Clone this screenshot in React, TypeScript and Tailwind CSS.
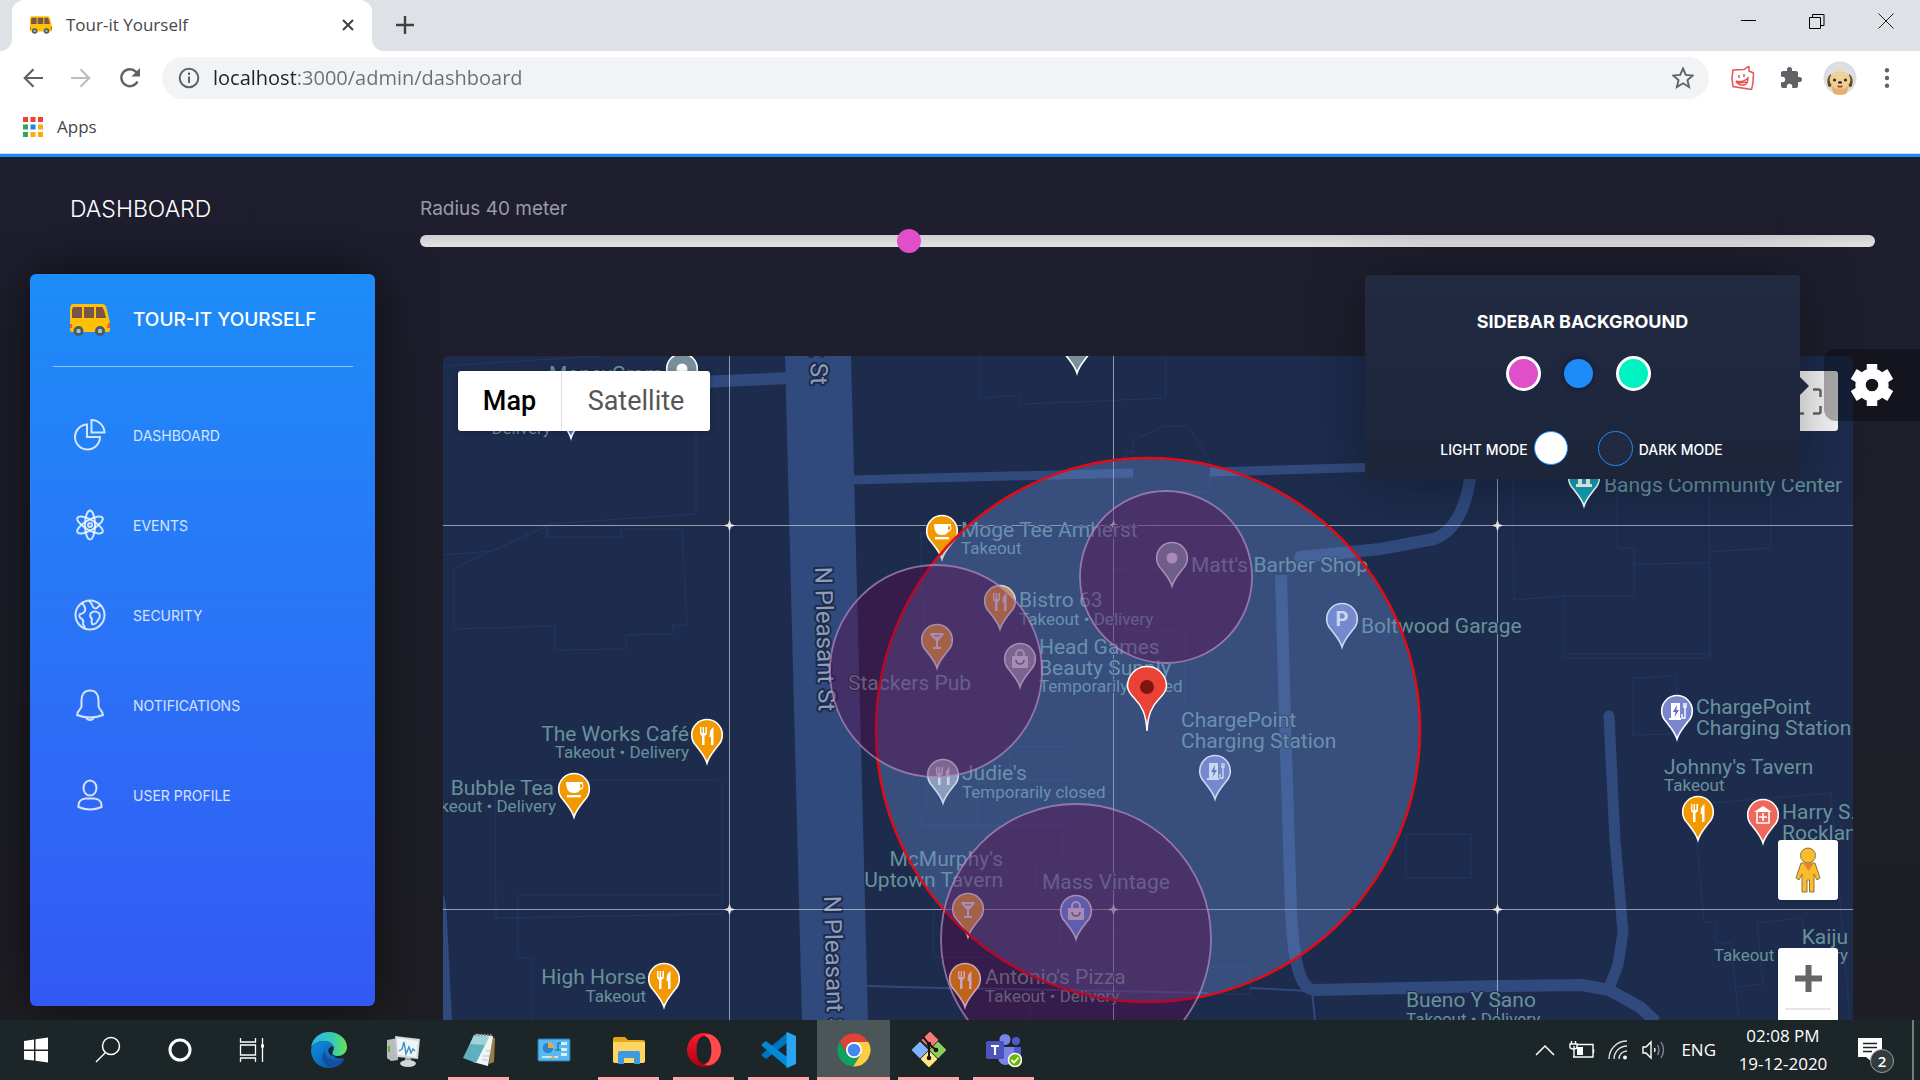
import React, { useState } from "react";

type Glyph = "cup" | "fork" | "cocktail" | "bag" | "dot" | "parking" | "ev" | "museum" | "hospital" | "none";

const ORANGE = "#f29900";
const GREY = "#78909c";
const INDIGO = "#7986cb";

const pins: { x: number; y: number; fill: string; glyph: Glyph }[] = [
  { x: 682, y: 396, fill: GREY, glyph: "dot" },
  { x: 571, y: 437, fill: "#4285f4", glyph: "none" },
  { x: 1077, y: 372, fill: GREY, glyph: "none" },
  { x: 942, y: 558, fill: ORANGE, glyph: "cup" },
  { x: 1000, y: 628, fill: ORANGE, glyph: "fork" },
  { x: 937, y: 667, fill: ORANGE, glyph: "cocktail" },
  { x: 1020, y: 686, fill: "#94a0ae", glyph: "bag" },
  { x: 1172, y: 585, fill: GREY, glyph: "dot" },
  { x: 1342, y: 646, fill: INDIGO, glyph: "parking" },
  { x: 1215, y: 798, fill: INDIGO, glyph: "ev" },
  { x: 943, y: 802, fill: "#9aa5b0", glyph: "fork" },
  { x: 968, y: 936, fill: ORANGE, glyph: "cocktail" },
  { x: 1076, y: 938, fill: "#5491f5", glyph: "bag" },
  { x: 965, y: 1006, fill: ORANGE, glyph: "fork" },
  { x: 707, y: 762, fill: ORANGE, glyph: "fork" },
  { x: 574, y: 816, fill: ORANGE, glyph: "cup" },
  { x: 664, y: 1006, fill: ORANGE, glyph: "fork" },
  { x: 1677, y: 738, fill: INDIGO, glyph: "ev" },
  { x: 1698, y: 839, fill: ORANGE, glyph: "fork" },
  { x: 1763, y: 842, fill: "#f0675c", glyph: "hospital" },
  { x: 1584, y: 505, fill: "#12a5b8", glyph: "museum" },
];

const labels: { x: number; y: number; text: string; small?: boolean; end?: boolean }[] = [
  { x: 549, y: 381, text: "MoneyGram" },
  { x: 551, y: 434, text: "Delivery", small: true, end: true },
  { x: 961, y: 537, text: "Moge Tee Amherst" },
  { x: 961, y: 554, text: "Takeout", small: true },
  { x: 1019, y: 607, text: "Bistro 63" },
  { x: 1019, y: 625, text: "Takeout • Delivery", small: true },
  { x: 1039, y: 654, text: "Head Games" },
  { x: 1039, y: 675, text: "Beauty Supply" },
  { x: 1039, y: 692, text: "Temporarily closed", small: true },
  { x: 1191, y: 572, text: "Matt's Barber Shop" },
  { x: 1361, y: 633, text: "Boltwood Garage" },
  { x: 848, y: 690, text: "Stackers Pub" },
  { x: 962, y: 780, text: "Judie's" },
  { x: 962, y: 798, text: "Temporarily closed", small: true },
  { x: 1181, y: 727, text: "ChargePoint" },
  { x: 1181, y: 748, text: "Charging Station" },
  { x: 1003, y: 866, text: "McMurphy's", end: true },
  { x: 1003, y: 887, text: "Uptown Tavern", end: true },
  { x: 1042, y: 889, text: "Mass Vintage" },
  { x: 985, y: 984, text: "Antonio's Pizza" },
  { x: 985, y: 1002, text: "Takeout • Delivery", small: true },
  { x: 689, y: 741, text: "The Works Café", end: true },
  { x: 689, y: 758, text: "Takeout • Delivery", small: true, end: true },
  { x: 554, y: 795, text: "Bubble Tea", end: true },
  { x: 556, y: 812, text: "Takeout • Delivery", small: true, end: true },
  { x: 646, y: 984, text: "High Horse", end: true },
  { x: 646, y: 1002, text: "Takeout", small: true, end: true },
  { x: 1696, y: 714, text: "ChargePoint" },
  { x: 1696, y: 735, text: "Charging Station" },
  { x: 1664, y: 774, text: "Johnny's Tavern" },
  { x: 1664, y: 791, text: "Takeout", small: true },
  { x: 1782, y: 819, text: "Harry S." },
  { x: 1782, y: 840, text: "Rockland" },
  { x: 1604, y: 492, text: "Bangs Community Center" },
  { x: 1848, y: 944, text: "Kaiju", end: true },
  { x: 1848, y: 961, text: "Takeout • Delivery", small: true, end: true },
  { x: 1406, y: 1007, text: "Bueno Y Sano" },
  { x: 1406, y: 1025, text: "Takeout • Delivery", small: true },
];

const buildings = [
  "M443 366L600 356",
  "M696 431V514L547 524V537L546 524M443 555L492 551L547 526",
  "M547 526V537H621V529H682L687 625H673V634L626 635V649L555 650V626L454 629V568L547 526",
  "M716 780H495L496 918L722 914V780",
  "M720 895H518V958H532V1020",
  "M980 356V398L1020 395V404L1078 402L1166 398V356",
  "M1125 478V452H1133V440H1133L1165 426L1188 426L1210 460V492H1136",
  "M921 593V533H1040V520H1158V530H1180V570H1107L1125 568V630L1190 632",
  "M924 593H970V605H990M924 593V650M924 660H1040M924 711H1030M1125 580H1190V632M1185 632V704H1110",
  "M926 747H1072V822H1072M968 747V780M1010 744V780H1072M926 747V812H922V826H1072M978 780V824M926 840L934 825H1063V860H1036V890",
  "M936 880L933 930V957H1030V1020M1030 932V945H1060V925H1110V870M1060 930H1165V970H1120M1208 967H1250V994H1208",
  "M1513 479L1514 600L1564 596V658H1710V596L1709 479M1564 596H1634V564L1709 563M1617 479V548H1634V564M1771 479V548L1709 552M1564 654H1710",
  "M1632 678L1676 676V734L1633 735V678M1406 834H1471V878H1406V834",
  "M1712 803L1831 793L1850 1020M1697 842L1704 922H1716V943H1731L1739 1020M1757 923L1802 918L1810 1020M1757 923L1763 984L1737 987",
];

function PinGlyph({ kind }: { kind: Glyph }) {
  switch (kind) {
    case "cup":
      return (
        <g fill="#fff">
          <path d="M-8-36H9V-34A4 4 0 0 1 6-28C5-26 3-25 0-25C-5-25-8-28-8-36ZM6-34V-30A2 2 0 0 0 7-34Z" fillRule="evenodd" />
          <rect x="-7" y="-23" width="14" height="2.4" />
        </g>
      );
    case "fork":
      return (
        <g fill="#fff">
          <path d="M-7-37V-31Q-7-29-5-28V-19H-2.500V-28Q0-29 0-31V-37H-1.600V-31H-3V-37H-4.400V-31H-5.600V-37Z" />
          <path d="M6.500-37Q2.500-35 2.500-27H4V-19H6.500Z" />
        </g>
      );
    case "cocktail":
      return <path d="M-6.500-36H6.500V-34L1-28V-22H4V-20H-4V-22H-1V-28L-6.500-34ZM-3.500-34L-2-32.500H2L3.500-34Z" fill="#fff" fillRule="evenodd" />;
    case "bag":
      return (
        <g>
          <rect x="-8" y="-32" width="16" height="12" rx="1" fill="#fff" />
          <path d="M-4-31V-34A4 4 0 0 1 4-34V-31" fill="none" stroke="#fff" strokeWidth="1.800" />
          <path d="M-4-28A4 4 0 0 0 4-28" fill="none" stroke="#5a6a9a" strokeWidth="1.600" />
        </g>
      );
    case "dot":
      return <circle cy="-29" r="5.500" fill="#fff" />;
    case "parking":
      return (
        <text y="-22" textAnchor="middle" fill="#fff" className="font-['Roboto',sans-serif] text-[20px] font-bold">
          P
        </text>
      );
    case "ev":
      return (
        <g>
          <path d="M-6-37H3V-22H4V-20H-8V-22H-6Z" fill="#fff" />
          <path d="M0-35L-4-28H-1.500L-2.500-23L2-30H-.5Z" fill="#5f6cc0" />
          <path d="M5-26V-22H8V-33M7-37V-33H9V-37" stroke="#fff" strokeWidth="1.400" fill="none" />
        </g>
      );
    case "museum":
      return <path d="M0-39L8-34V-32H-8V-34ZM-6-31H-2V-23H-6ZM2-31H6V-23H2ZM-8-23H8V-20H-8Z" fill="#fff" />;
    case "hospital":
      return (
        <g>
          <path d="M0-38L9-32H-9Z" fill="#fff" />
          <path d="M-6-32V-21H6V-32" stroke="#fff" strokeWidth="1.600" fill="none" />
          <path d="M0-31V-23M-4-27H4" stroke="#fff" strokeWidth="1.600" fill="none" />
        </g>
      );
    default:
      return null;
  }
}

function MapDrawing() {
  return (
    <svg className="absolute inset-0 h-full w-full font-['Roboto',sans-serif]" aria-label="Map of N Pleasant St">
      <g transform="translate(-443 -356)">
        <g fill="none" stroke="#223766" strokeWidth="1">
          {buildings.map((d) => (
            <path key={d} d={d} />
          ))}
        </g>
        <g fill="none" stroke="#304a7d" strokeLinejoin="round">
          <path d="M785 356H851L868 1020H802Z" fill="#304a7d" stroke="none" />
          <path d="M443 895Q446 898 447 920L452 1020H443Z" fill="#304a7d" stroke="none" />
          <path d="M700 382L790 378" strokeWidth="12" />
          <path d="M850 480L1133 473M1210 472L1380 467" strokeWidth="9" />
          <path d="M1471 470C1468 505 1455 532 1434 539L1380 549L1300 557" strokeWidth="12" strokeLinecap="round" />
          <path d="M1281 575L1285 720L1291 910C1293 950 1297 990 1315 990L1500 986L1582 985L1609 990L1640 1007L1656 1022" strokeWidth="12" />
          <path d="M1609 716L1615 840L1623 932L1618 965L1609 988" strokeWidth="11" strokeLinecap="round" />
          <path d="M867 986L941 988L1110 991L1208 993M1250 988L1310 991M1312 990L1315 1020" strokeWidth="2" />
        </g>

        <g fill="#8f9db9" stroke="#1d2c4d" strokeWidth="4" strokeLinejoin="round" className="text-[24px]" style={{ paintOrder: "stroke" }}>
          <text transform="translate(811 385) rotate(88.500)" textAnchor="end">N Pleasant St</text>
          <text transform="translate(815 567) rotate(88.500)">N Pleasant St</text>
          <text transform="translate(824 896) rotate(88.500)">N Pleasant St</text>
        </g>

        <g stroke="#d6d9e2" strokeOpacity=".65" strokeWidth="1">
          <path d="M729.500 356V1020M1113.500 356V1020M1497.500 356V1020M443 525.500H1853M443 909.500H1853" />
        </g>
        {[729.5, 1113.5, 1497.5].map((x) =>
          [525.5, 909.5].map((y) => (
            <path key={`${x}-${y}`} transform={`translate(${x} ${y})`} d="M0-6L1.500-1.500L6 0L1.500 1.500L0 6L-1.500 1.500L-6 0L-1.500-1.500Z" fill="#e6e3e0" />
          )),
        )}

        <g fill="#67929b" stroke="#1d2c4d" strokeWidth="2" strokeLinejoin="round" style={{ paintOrder: "stroke" }}>
          {labels.map((l) => (
            <text key={`${l.text}${l.x}${l.y}`} x={l.x} y={l.y} textAnchor={l.end ? "end" : "start"} className={l.small ? "text-[17px]" : "text-[21px]"}>
              {l.text}
            </text>
          ))}
        </g>

        {pins.map((p) => (
          <g key={`${p.x}-${p.y}`} transform={`translate(${p.x} ${p.y + 2})`}>
            <path d="M0-1C-2-8-6-12-11-18.500A15.300 15.300 0 1 1 11-18.500C6-12 2-8 0-1Z" fill={p.fill} stroke="#fff" strokeWidth="1.600" />
            <PinGlyph kind={p.glyph} />
          </g>
        ))}

        <circle cx="1148" cy="730" r="272" fill="#6d90d3" fillOpacity=".35" stroke="#e30b17" strokeWidth="2.500" />
        <g fill="#670044" fillOpacity=".35" stroke="#b58fc0" strokeOpacity=".7" strokeWidth="1.800">
          <circle cx="936" cy="671" r="106" />
          <circle cx="1166" cy="577" r="86" />
          <circle cx="1076" cy="939" r="135" />
        </g>

        <path d="M1147 731C1146 714 1142 706 1135 699C1130 694 1127.500 690 1127.500 686A19.500 19.500 0 1 1 1166.500 686C1166.500 690 1164 694 1159 699C1152 706 1148 714 1147 731Z" fill="#ea4335" stroke="#fff" strokeWidth="1.500" />
        <circle cx="1147" cy="687" r="7" fill="#811411" />
      </g>
    </svg>
  );
}

function Bus({ className }: { className: string }) {
  return (
    <svg viewBox="0 0 40 32" className={className} aria-hidden="true">
      <path d="M3 0H32C35 0 36 2 37 6L40 19V26Q40 28 38 28H2Q0 28 0 26V6Q0 0 3 0Z" fill="#ffc107" />
      <path d="M3 3H12V14H2V6ZM14 3H24V14H14ZM26 3H32Q34 4 36 14H26Z" fill="#795548" />
      <path d="M0 20H2V24H0ZM38 19H40V24H37Z" fill="#ff5722" />
      <circle cx="8.500" cy="27" r="5" fill="#455a64" />
      <circle cx="30" cy="27" r="5" fill="#455a64" />
      <circle cx="8.500" cy="27" r="2.200" fill="#b0bec5" />
      <circle cx="30" cy="27" r="2.200" fill="#b0bec5" />
    </svg>
  );
}

const navIcons: Record<string, React.ReactNode> = {
  DASHBOARD: <path d="M13 5.500A12.500 12.500 0 1 0 26 18H13ZM17.500 1V13.500H30.500A13 13 0 0 0 17.500 1Z" />,
  EVENTS: (
    <>
      <ellipse cx="16" cy="16" rx="5" ry="14.500" />
      <ellipse cx="16" cy="16" rx="5" ry="14.500" transform="rotate(60 16 16)" />
      <ellipse cx="16" cy="16" rx="5" ry="14.500" transform="rotate(-60 16 16)" />
      <circle cx="16" cy="16" r="2" />
    </>
  ),
  SECURITY: (
    <>
      <circle cx="16" cy="16" r="14.500" />
      <path d="M8 4Q12 8 11 12Q9 15 6 15Q4 18 8 20Q10 22 9 25L11 29M15 2Q18 4 19 8Q22 11 24 8L27 6M17 14Q20 11 25 14Q27 18 24 21Q22 26 18 25Q17 22 18 20Q15 17 17 14Z" />
    </>
  ),
  NOTIFICATIONS: <path d="M16 1.500C10 1.500 7.500 6 7.500 11V17C7.500 20 3 22 3 26Q9 28.500 16 28.500T29 26C29 22 24.500 20 24.500 17V11C24.500 6 22 1.500 16 1.500ZM12 28.500Q13 31 16 31T20 28.500" />,
  "USER PROFILE": (
    <>
      <ellipse cx="16" cy="9" rx="6.500" ry="7.500" />
      <path d="M4.500 28V26Q5 20 12 19.500H20Q27 20 27.500 26V28Q22 30.500 16 30.500T4.500 28Z" />
    </>
  ),
};

function WinIcon({ children, label, className = "h-9 w-9" }: { children: React.ReactNode; label: string; className?: string }) {
  return (
    <svg viewBox="0 0 36 36" className={className} aria-label={label}>
      {children}
    </svg>
  );
}

const systemButtons: { label: string; icon: React.ReactNode }[] = [
  { label: "Start", icon: <path d="M6 9L16 7.500V17.500H6ZM17.500 7.300L30 5.500V17.500H17.500ZM6 19H16V28.500L6 27.500ZM17.500 19H30V30.500L17.500 28.700Z" fill="#fff" /> },
  { label: "Search", icon: <g fill="none" stroke="#fff" strokeWidth="1.500"><circle cx="21" cy="14" r="8.500" /><path d="M15.500 20.500L6 30" /></g> },
  { label: "Cortana", icon: <circle cx="18" cy="18" r="10" fill="none" stroke="#fff" strokeWidth="3" /> },
  { label: "Task View", icon: <g fill="none" stroke="#fff" strokeWidth="1.300"><path d="M6.500 6V10H21.500V6M6.500 30V26H21.500V30M6.500 13H21.500V23H6.500ZM28.500 6V30" /><rect x="27" y="12.500" width="3" height="3" fill="#fff" stroke="none" /></g> },
];

const taskButtons: { label: string; open?: boolean; active?: boolean; icon: React.ReactNode }[] = [
  {
    label: "Edge",
    icon: (
      <>
        <defs>
          <linearGradient id="edgeA" x1="0" x2="1"><stop offset="0" stopColor="#2fb4f0" /><stop offset=".6" stopColor="#36c8b8" /><stop offset="1" stopColor="#6be34f" /></linearGradient>
          <linearGradient id="edgeB" x1="0" x2="1" y2="1"><stop offset="0" stopColor="#0f8fe0" /><stop offset="1" stopColor="#0a4fa3" /></linearGradient>
        </defs>
        <path d="M0 16C1 6 9 0 18 0C28 0 36 7 36 15C36 21 31 24 27 24C23 24 20 22 22 19C25 14 19 9 13 9C7 9 2 12 0 16Z" fill="url(#edgeA)" />
        <path d="M0 18C1 12 7 9 13 9C20 9 24 14 22 18C19 24 26 28 33 26C30 32 24 36 18 36C7 36 0 28 0 18Z" fill="url(#edgeB)" />
        <path d="M14 19C9 24 11 33 20 36C26 35.500 31 32 33.500 27C25 31 14 28 14 19Z" fill="#124f9e" />
        <path d="M22 14C24 18 19 21 22 24C19 23 16 20 18 16Z" fill="#1c2527" />
      </>
    ),
  },
  {
    label: "System monitor",
    icon: (
      <>
        <path d="M1 8L12 6V28L5 29L1 26Z" fill="#b9bcbd" /><rect x="2" y="14" width="2" height="6" fill="#57b52c" />
        <path d="M9 4L34 7L32 27L11 25Z" fill="#d6d8d9" /><path d="M11 6L32 9L30 25L12 23Z" fill="#eef6fb" />
        <path d="M13 19L16 17L18 10L20 22L23 15L25 21L27 17L29 19" fill="none" stroke="#3d8fc4" strokeWidth="1.400" />
        <path d="M19 26H25V30H19Z" fill="#a5a8a9" /><ellipse cx="22" cy="31.500" rx="8" ry="3.500" fill="#d4d6d7" />
      </>
    ),
  },
  {
    label: "Notepad",
    open: true,
    icon: (
      <>
        <path d="M30 5L34 6L33 30L28 32Z" fill="#9a7c46" /><path d="M14 2L32 4L27 34L12 30Z" fill="#f0f4f5" />
        <path d="M13 3L28 5L15 31L2 26Z" fill="#5fb0bd" /><path d="M13 3L28 5L24 13L9 12Z" fill="#9fd3da" />
        <path d="M14 3H31" stroke="#888" strokeWidth="2.500" strokeDasharray="1.500 1.500" />
        <path d="M22 24H28M21 28H27M25 19H29" stroke="#b9c4c8" />
      </>
    ),
  },
  {
    label: "Control Panel",
    icon: (
      <>
        <rect x="2" y="7" width="32" height="22" rx="1" fill="#59b9ee" stroke="#2178b0" /><circle cx="12" cy="16" r="5.500" fill="#eaf6fd" />
        <path d="M12 16V10.500A5.500 5.500 0 0 1 17.500 16Z" fill="#f5a623" /><path d="M12 16V10.500A5.500 5.500 0 1 0 17.500 16Z" fill="#2a86cf" />
        <path d="M19 18H22V11H25M22 18H25" fill="none" stroke="#155f94" /><path d="M25 10H31V13H25ZM25 16H31V19H25ZM25 21H31V24H25Z" fill="#d6effc" />
        <path d="M6 25H22" stroke="#e7f6fe" strokeWidth="1.500" /><circle cx="17" cy="25" r="1.500" fill="#f5a623" />
      </>
    ),
  },
  {
    label: "File Explorer",
    open: true,
    icon: (
      <>
        <path d="M2 7Q2 5 4 5H14L17 8H32Q34 8 34 10V30H2Z" fill="#e6a516" /><path d="M2 10H34V29Q34 31 32 31H4Q2 31 2 29Z" fill="#ffd664" />
        <path d="M7 21Q7 19 9 19H27Q29 19 29 21V32H23V26H13V32H7Z" fill="#3c9be0" />
      </>
    ),
  },
  {
    label: "Opera",
    open: true,
    icon: (
      <>
        <defs><linearGradient id="opera" y2="1" x2="0"><stop offset="0" stopColor="#ff1b2d" /><stop offset="1" stopColor="#a70014" /></linearGradient></defs>
        <path d="M18 1A17 17 0 1 1 18 35A17 17 0 1 1 18 1ZM18 4C13 4 10.500 11 10.500 18S13 32 18 32S25.500 25 25.500 18S23 4 18 4Z" fill="url(#opera)" fillRule="evenodd" />
        <path d="M18 4C25 -1 35 8 35 18S25 37 18 32C23 32 25.500 25 25.500 18S23 4 18 4Z" fill="#ff4b4b" />
      </>
    ),
  },
  {
    label: "Visual Studio Code",
    open: true,
    icon: (
      <>
        <path d="M26 1V11L5 27L1 24Q0 23 1 22Z" fill="#0073bd" /><path d="M26 35V25L5 9L1 12Q0 13 1 14Z" fill="#008ad6" />
        <path d="M26 0L35 4V32L26 36Q25 35 25.500 34V2Q25 1 26 0Z" fill="#27a5f3" />
      </>
    ),
  },
  {
    label: "Chrome",
    open: true,
    active: true,
    icon: (
      <>
        <path d="M18 10H32.400A16.500 16.500 0 0 1 17 34.500L25 22Z" fill="#ffcd40" />
        <path d="M11 22L3.700 9.500A16.500 16.500 0 0 0 17 34.500L24 23L18 26Z" fill="#10a15e" />
        <path d="M3.700 9.500A16.500 16.500 0 0 1 32.400 10H18L11 15V21Z" fill="#dc4437" />
        <circle cx="18" cy="18" r="8" fill="#fff" /><circle cx="18" cy="18" r="6.300" fill="#4587f3" />
      </>
    ),
  },
  {
    label: "Git Bash",
    open: true,
    icon: (
      <>
        <rect x="13" y="2" width="12" height="12" rx="1" transform="rotate(45 19 8)" fill="#f77a77" />
        <rect x="3" y="12" width="12" height="12" rx="1" transform="rotate(45 9 18)" fill="#80b3ff" />
        <rect x="21" y="12" width="12" height="12" rx="1" transform="rotate(45 27 18)" fill="#87cf5a" />
        <rect x="12" y="21" width="12" height="12" rx="1" transform="rotate(45 18 27)" fill="#ffe680" />
        <path d="M12 5L18 12V27M18 12L25 18" stroke="#1d1512" strokeWidth="2" fill="none" />
        <circle cx="18" cy="12" r="2.300" fill="#1d1512" /><circle cx="18" cy="26" r="2.300" fill="#1d1512" /><circle cx="25" cy="18" r="2.300" fill="#1d1512" />
      </>
    ),
  },
  {
    label: "Teams",
    open: true,
    icon: (
      <>
        <circle cx="19" cy="7.500" r="5.500" fill="#7b83eb" /><circle cx="30" cy="9" r="4" fill="#5059c9" />
        <path d="M24 15H35V25Q34 30 28 30H24Z" fill="#5059c9" /><path d="M12 15H28V25Q27 33 19 33Q13 32 12 26Z" fill="#7b83eb" />
        <rect x="0" y="9" width="18" height="18" rx="1.500" fill="#4b53bc" /><path d="M5 14H13M9 14V23" stroke="#fff" strokeWidth="2.200" />
        <circle cx="29" cy="28" r="6.500" fill="#6bb700" stroke="#fff" strokeWidth="1.500" /><path d="M25.500 28L28 30.500L32.500 25.500" stroke="#fff" strokeWidth="1.800" fill="none" />
      </>
    ),
  },
];

function BrowserChrome() {
  return (
    <header className="shrink-0 bg-white font-['Open_Sans',sans-serif]">
      <div className="flex h-[51px] items-stretch bg-[#dee1e6]">
        <div className="flex w-3 bg-white"><div className="w-full rounded-br-xl bg-[#dee1e6]" /></div>
        <div className="flex w-[360px] items-center rounded-t-xl bg-white pr-3 pb-[2px] pl-[18px]">
          <Bus className="h-[18px] w-[22px]" />
          <span className="ml-[14px] flex-1 text-[17px] text-[#45474a]">Tour-it Yourself</span>
          <button aria-label="Close tab" className="flex h-6 w-6 items-center justify-center">
            <svg viewBox="0 0 12 12" className="h-3 w-3"><path d="M1 1L11 11M11 1L1 11" stroke="#3c4043" strokeWidth="2" /></svg>
          </button>
        </div>
        <div className="flex w-3 bg-white"><div className="w-full rounded-bl-xl bg-[#dee1e6]" /></div>
        <button aria-label="New tab" className="ml-2 flex w-[26px] items-center justify-center pb-[2px]">
          <svg viewBox="0 0 18 18" className="h-[18px] w-[18px]"><path d="M9 0V18M0 9H18" stroke="#3c4043" strokeWidth="2.400" /></svg>
        </button>
        <div className="flex-1" />
        <div className="flex h-[42px]">
          <button aria-label="Minimize" className="flex w-[69px] items-center justify-center"><svg viewBox="0 0 16 16" className="h-4 w-4"><path d="M0 7.500H15" stroke="#000" /></svg></button>
          <button aria-label="Restore" className="flex w-[68px] items-center justify-center"><svg viewBox="0 0 16 16" className="h-4 w-4"><path d="M.5 4.500H11.500V15.500H.5ZM3.500 4V1.500H15V12.500H12" stroke="#000" fill="none" /></svg></button>
          <button aria-label="Close" className="flex w-[69px] items-center justify-center"><svg viewBox="0 0 16 16" className="h-4 w-4"><path d="M.5.5L15.500 15.500M15.500.5L.5 15.500" stroke="#222" /></svg></button>
        </div>
      </div>

      <div className="flex h-[54px] items-center pr-[27px] pl-[23px]">
        <button aria-label="Back" className="mr-7"><svg viewBox="0 0 20 20" className="h-5 w-5"><path d="M20 10H2M10.500 1.200L1.800 10L10.500 18.800" stroke="#5f6368" strokeWidth="2.200" fill="none" /></svg></button>
        <button aria-label="Forward" className="mr-7"><svg viewBox="0 0 20 20" className="h-5 w-5"><path d="M0 10H18M9.500 1.200L18.200 10L9.500 18.800" stroke="#bcbec0" strokeWidth="2.200" fill="none" /></svg></button>
        <button aria-label="Reload" className="mr-[21px]"><svg viewBox="0 0 22 22" className="h-[22px] w-[22px]"><path d="M18.500 14.500A8.500 8.500 0 1 1 17 4.800L18.500 6.500" stroke="#5f6368" strokeWidth="2.400" fill="none" /><path d="M21 1V9.500H12.500Z" fill="#5f6368" /></svg></button>
        <div className="flex h-[42px] flex-1 items-center rounded-full bg-[#f1f3f4] pr-[15px] pl-[16px]">
          <svg viewBox="0 0 22 22" className="h-[22px] w-[22px]" aria-hidden="true"><circle cx="11" cy="11" r="9.300" stroke="#5f6368" strokeWidth="2" fill="none" /><path d="M11 5.500V8M11 9.500V16" stroke="#5f6368" strokeWidth="2" /></svg>
          <input aria-label="Address" defaultValue="localhost:3000/admin/dashboard" className="ml-[13px] flex-1 bg-[linear-gradient(to_right,#202124_83px,#6b6f73_83px)] bg-clip-text text-[20px] text-transparent outline-none" />
          <button aria-label="Bookmark"><svg viewBox="0 0 22 22" className="h-[22px] w-[22px]"><path d="M11 1.500L13.800 7.900L20.800 8.500L15.500 13.100L17.100 20L11 16.300L4.900 20L6.500 13.100L1.200 8.500L8.200 7.900Z" stroke="#5f6368" strokeWidth="1.900" fill="none" /></svg></button>
        </div>
        <button aria-label="Extension" className="ml-[22px]"><svg viewBox="0 0 24 24" className="h-6 w-6"><path d="M2 4L13 3.500L18 0L18 5L22.500 7L22 17L20.500 23.500L2 20.500L1 12ZM8 9V12M13 8V11M5 15Q12 17 17 12Q17 20 10 19Q6 18 5 15M7 17L16 16" stroke="#e25550" strokeWidth="1.500" fill="none" /></svg></button>
        <button aria-label="Extensions" className="ml-[24px]"><svg viewBox="0 0 24 24" className="h-6 w-6"><path d="M20.500 11H19V7c0-1.100-.9-2-2-2h-4V3.500a2.500 2.500 0 0 0-5 0V5H4c-1.100 0-2 .9-2 2v3.800h1.500a2.700 2.700 0 0 1 0 5.400H2V20c0 1.100.9 2 2 2h3.800v-1.500a2.700 2.700 0 0 1 5.400 0V22H17c1.100 0 2-.9 2-2v-4h1.500a2.500 2.500 0 0 0 0-5Z" fill="#5f6368" /></svg></button>
        <button aria-label="Profile" className="ml-[20px]">
          <svg viewBox="0 0 34 34" className="h-[34px] w-[34px]"><circle cx="17" cy="17" r="16.500" fill="#dcdee0" /><path d="M8 26Q17 20 26 26L23 33Q17 35 11 33Z" fill="#e2b070" /><path d="M8 13Q3 16 5 25Q8 28 9 22ZM26 13Q31 16 29 25Q26 28 25 22Z" fill="#6b4420" /><ellipse cx="17" cy="19" rx="10.500" ry="9" fill="#f2cf93" /><circle cx="11.500" cy="19" r="1.600" fill="#333" /><circle cx="22.500" cy="19" r="1.600" fill="#333" /><ellipse cx="17" cy="21.500" rx="2" ry="1.300" fill="#222" /><path d="M14.500 25Q17 26.500 19.500 25" stroke="#a0442f" strokeWidth="1.500" fill="none" /></svg>
        </button>
        <button aria-label="Menu" className="ml-[24px]"><svg viewBox="0 0 12 20" className="h-5 w-3"><circle cx="6" cy="2.300" r="2.200" fill="#5f6368" /><circle cx="6" cy="10" r="2.200" fill="#5f6368" /><circle cx="6" cy="17.700" r="2.200" fill="#5f6368" /></svg></button>
      </div>

      <div className="flex h-[49px] items-center border-b border-[#d5dbe2] pb-[5px] pl-[23px]">
        <a href="#apps" className="flex items-center gap-[14px] text-[17px] text-[#45474a]">
          <svg viewBox="0 0 20 20" className="h-5 w-5" aria-hidden="true">
            <path d="M0 0H5V5H0ZM7.500 0H12.500V5H7.500ZM15 0H20V5H15Z" fill="#ee4237" />
            <path d="M0 7.500H5V12.500H0ZM0 15H5V20H0Z" fill="#35a257" /><path d="M7.500 7.500H12.500V12.500H7.500Z" fill="#1d83e8" />
            <path d="M15 7.500H20V12.500H15ZM7.500 15H12.500V20H7.500ZM15 15H20V20H15Z" fill="#f9ab12" />
          </svg>
          Apps
        </a>
      </div>
    </header>
  );
}

function Sidebar() {
  return (
    <aside className="flex-1 rounded-[6px] bg-linear-to-b from-[#1d8cf8] to-[#3358f4] shadow-[0_0_60px_rgba(0,0,0,0.6)]">
      <div className="mr-[22px] ml-[23px] flex h-[93px] items-center border-b border-white/50 pl-[17px]">
        <Bus className="h-8 w-10" />
        <a href="#home" className="ml-[23px] pt-px text-[19px] font-medium whitespace-nowrap text-white">TOUR-IT YOURSELF</a>
      </div>
      <nav className="flex flex-col pt-[23px]">
        {Object.keys(navIcons).map((name) => (
          <a key={name} href="#section" className="flex h-[90px] items-center pl-[44px] text-[14px] text-white/80">
            <svg viewBox="0 0 32 32" className="mr-[27px] h-8 w-8" fill="none" stroke="currentColor" strokeWidth="2" aria-hidden="true">{navIcons[name]}</svg>
            {name}
          </a>
        ))}
      </nav>
    </aside>
  );
}

function SettingsPanel() {
  return (
    <>
      <section className="absolute top-[118px] right-[120px] flex h-[204px] w-[435px] flex-col items-center rounded-[4px] bg-linear-to-b from-[#222a42] to-[#1d253b] text-white shadow-[0_0_60px_rgba(0,0,0,0.35)]">
        <h2 className="mt-[35px] text-[18px] leading-6 font-bold">SIDEBAR BACKGROUND</h2>
        <div className="mt-[21px] mr-2 flex h-9 items-center gap-[23px]">
          <button aria-label="Pink" className="h-[35px] w-[35px] rounded-full border-[3px] border-white bg-[#e14eca]" />
          <button aria-label="Blue" className="h-[29px] w-[29px] rounded-full bg-[#1d8cf8] shadow-[0_0_6px_rgba(0,0,0,0.4)]" />
          <button aria-label="Green" className="h-[35px] w-[35px] rounded-full border-[3px] border-white bg-[#00f2c3]" />
        </div>
        <div className="mt-[39px] mr-[2px] flex h-9 items-center text-[14px] font-medium">
          <button className="flex items-center gap-[6px]"><span className="pt-[3px]">LIGHT MODE</span><span className="h-[34px] w-[34px] rounded-full border border-[#1d8cf8] bg-white" /></button>
          <button className="ml-[30px] flex items-center gap-[6px]"><span className="h-[35px] w-[35px] rounded-full border border-[#1d8cf8] bg-[#222a42]" /><span className="pt-[3px]">DARK MODE</span></button>
        </div>
        <span className="absolute top-[102px] left-full border-y-[9px] border-l-[9px] border-y-transparent border-l-[#222a42]" />
      </section>
      <button aria-label="Settings" className="absolute top-[192px] right-0 flex h-[72px] w-24 items-center justify-center rounded-l-xl bg-black/30">
        <svg viewBox="0 0 40 40" className="h-[42px] w-[42px]">
          <path d="M15.500 0H24.500V5.500A15 15 0 0 1 29.500 8.500L34.500 5.500L39.500 14L35 17A15 15 0 0 1 35 23L39.500 26L34.500 34.500L29.500 31.500A15 15 0 0 1 24.500 34.500V40H15.500V34.500A15 15 0 0 1 10.500 31.500L5.500 34.500L.5 26L5 23A15 15 0 0 1 5 17L.5 14L5.500 5.500L10.500 8.500A15 15 0 0 1 15.500 5.500ZM20 13.500A6.500 6.500 0 1 0 20 26.500A6.500 6.500 0 1 0 20 13.500Z" fill="#fff" stroke="#fff" strokeLinejoin="round" fillRule="evenodd" />
        </svg>
      </button>
    </>
  );
}

function MapPanel() {
  return (
    <section className="relative mt-[109px] mr-[22px] ml-[23px] flex-1 overflow-hidden rounded-t-[6px] bg-[#1d2c4d]">
      <MapDrawing />
      <div className="absolute top-[15px] left-[15px] flex h-[60px] overflow-hidden rounded-[3px] bg-white font-['Roboto',sans-serif] text-[27px] shadow-[0_1px_5px_rgba(0,0,0,0.3)]">
        <button className="w-[104px] border-r border-[#e0e0e0] font-medium text-black">Map</button>
        <button className="w-[148px] text-[#565656]">Satellite</button>
      </div>
      <button aria-label="Full screen" className="absolute top-[15px] right-[15px] flex h-[60px] w-[60px] items-center justify-center rounded-[3px] bg-[#f5f5f5]">
        <svg viewBox="0 0 27 27" className="h-[27px] w-[27px]"><path d="M1.500 9V3.500Q1.500 1.500 3.500 1.500H9M18 1.500H23.500Q25.500 1.500 25.500 3.500V9M25.500 18V23.500Q25.500 25.500 23.500 25.500H18M9 25.500H3.500Q1.500 25.500 1.500 23.500V18" fill="none" stroke="#666" strokeWidth="2.500" /></svg>
      </button>
      <div className="absolute top-[484px] right-[15px] flex w-[60px] flex-col gap-12">
        <button aria-label="Street View" className="flex h-[60px] items-center justify-center rounded-[3px] bg-white shadow">
          <svg viewBox="0 0 26 46" className="h-[46px] w-[26px]">
            <g fill="#fbbc2c" stroke="#8b7440" strokeWidth="1">
              <path d="M6 16H20L25 31L22 33L19 27V45H14.500V33H12V45H7V27L4 33L1 31Z" /><ellipse cx="13" cy="8.500" rx="7.500" ry="7.500" />
            </g>
            <path d="M8 16H19L13.500 24Z" fill="#e28632" />
          </svg>
        </button>
        <div className="rounded-[3px] bg-white shadow">
          <button aria-label="Zoom in" className="flex h-[60px] w-full items-center justify-center"><svg viewBox="0 0 27 27" className="h-[27px] w-[27px]"><path d="M13.500 0V27M0 13.500H27" stroke="#666" strokeWidth="6" /></svg></button>
          <div className="mx-[7px] h-[2px] bg-[#e6e6e6]" />
          <button aria-label="Zoom out" className="flex h-[60px] w-full items-center justify-center"><svg viewBox="0 0 27 27" className="h-[27px] w-[27px]"><path d="M0 13.500H27" stroke="#666" strokeWidth="6" /></svg></button>
        </div>
      </div>
    </section>
  );
}

function Taskbar() {
  return (
    <footer className="flex h-[60px] shrink-0 items-stretch bg-[#1c2527] font-['Open_Sans',sans-serif] text-white">
      {systemButtons.map((b) => (
        <button key={b.label} className="flex w-[72px] items-center justify-center"><WinIcon label={b.label}>{b.icon}</WinIcon></button>
      ))}
      <div className="flex pl-[3px]">
        {taskButtons.map((b) => (
          <button key={b.label} className="flex w-[75px] justify-center">
            <span className={b.active ? "flex w-[73px] flex-col items-center bg-[#4a5657]" : "flex w-[61px] flex-col items-center"}>
              <span className="flex flex-1 items-center pt-[3px]"><WinIcon label={b.label}>{b.icon}</WinIcon></span>
              <span className={b.open ? "h-[3px] w-full bg-[#fca8ac]" : "h-[3px] w-full"} />
            </span>
          </button>
        ))}
      </div>
      <div className="flex-1" />
      <div className="flex items-center">
        <button aria-label="Show hidden icons" className="mr-[14px]"><svg viewBox="0 0 20 12" className="h-3 w-5"><path d="M1 11L10 2L19 11" stroke="#fff" strokeWidth="1.500" fill="none" /></svg></button>
        <svg viewBox="0 0 26 20" className="mr-[13px] h-5 w-[26px]" aria-label="Battery"><path d="M5 17V6M8 4.500H24V17H4M24.500 9V13M2.500 1V4M6.500 1V4M1 4H8V7Q8 9 4.500 9T1 7Z" stroke="#fff" strokeWidth="1.400" fill="none" /><rect x="8" y="7" width="6" height="8" fill="#fff" /></svg>
        <svg viewBox="0 0 20 20" className="mr-[14px] h-5 w-5" aria-label="Wi-Fi"><path d="M1 19A18 18 0 0 1 19 1M6 19A13 13 0 0 1 19 6M11 19A8 8 0 0 1 19 11" stroke="#ddd" strokeWidth="1.400" fill="none" /><circle cx="17" cy="17.500" r="2" fill="#fff" /></svg>
        <svg viewBox="0 0 24 20" className="mr-[15px] h-5 w-6" aria-label="Volume"><path d="M1 7H4L9 2V18L4 13H1ZM12.500 8Q13.500 10 12.500 12" stroke="#fff" strokeWidth="1.400" fill="none" /><path d="M15.500 5Q18.500 10 15.500 15M19 2Q24 10 19 18" stroke="#889" strokeWidth="1.400" fill="none" /></svg>
        <span className="text-[17px]">ENG</span>
        <time className="ml-[19px] flex w-[96px] flex-col items-center text-[17px] leading-7 whitespace-nowrap"><span>02:08 PM</span><span>19-12-2020</span></time>
        <button aria-label="Notifications" className="relative ml-[27px] h-10 w-[38px]">
          <svg viewBox="0 0 24 24" className="absolute top-[8px] left-0 h-6 w-6"><path d="M0 0H24V19H14V24L8 19H0Z" fill="#fff" /><path d="M5 5.500H19M5 9.500H19M5 13.500H14" stroke="#1c2527" strokeWidth="1.300" /></svg>
          <span className="absolute top-[19px] left-[12px] flex h-6 w-6 items-center justify-center rounded-full border border-[#9a9fa0] bg-[#333b3d] text-[15px] font-semibold">2</span>
        </button>
      </div>
      <div className="ml-[16px] w-2 border-l-2 border-[#777c7d]" />
    </footer>
  );
}

export default function App() {
  const [radius, setRadius] = useState(40);
  return (
    <div className="flex h-screen flex-col overflow-hidden bg-[#1e1e24]">
      <BrowserChrome />
      <main className="relative flex min-h-0 flex-1 overflow-hidden border-t-[3px] border-[#1d8cf8] bg-linear-to-b from-[#1e1e2f] to-[#1e1e24] font-['Inter',sans-serif]">
        <div className="flex w-[375px] shrink-0 flex-col pb-[14px] pl-[30px]">
          <h1 className="mb-[49px] pt-[36px] pl-10 text-[23px] leading-8 font-light text-white">DASHBOARD</h1>
          <Sidebar />
        </div>
        <div className="ml-[45px] flex min-w-0 flex-1 flex-col pr-[45px]">
          <label htmlFor="radius" className="mt-[40px] text-[19px] leading-6 text-[#9b9ba6]">Radius {radius} meter</label>
          <input
            id="radius"
            type="range"
            min={0}
            max={120}
            value={radius}
            onChange={(e) => setRadius(Number(e.target.value))}
            className="mt-[14px] h-3 w-full shrink-0 appearance-none rounded-full bg-linear-to-b from-[#cfcfd3] to-[#e3e3e3] [&::-webkit-slider-thumb]:h-6 [&::-webkit-slider-thumb]:w-6 [&::-webkit-slider-thumb]:appearance-none [&::-webkit-slider-thumb]:rounded-full [&::-webkit-slider-thumb]:bg-[#e14eca]"
          />
          <MapPanel />
        </div>
        <SettingsPanel />
      </main>
      <Taskbar />
    </div>
  );
}
